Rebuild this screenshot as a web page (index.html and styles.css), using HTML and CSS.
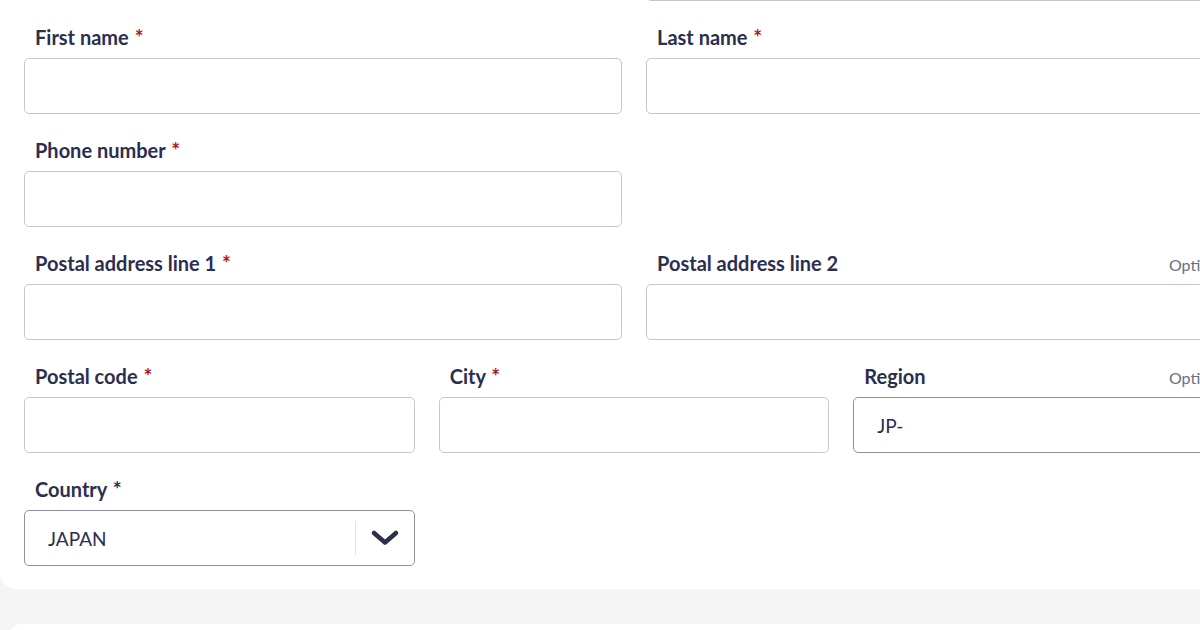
FILE: index.html
```html
<!DOCTYPE html>
<html lang="en">
<head>
<meta charset="utf-8">
<title>Address form</title>
<link rel="stylesheet" href="styles.css">
</head>
<body>
<div class="page">
  <section class="card">
    <div class="row two prev">
      <div class="field"></div>
      <div class="field"><div class="input"></div></div>
    </div>
    <div class="row two">
      <div class="field">
        <div class="label"><span>First name <b class="req">*</b></span></div>
        <div class="input"></div>
      </div>
      <div class="field">
        <div class="label"><span>Last name <b class="req">*</b></span></div>
        <div class="input"></div>
      </div>
    </div>
    <div class="row two">
      <div class="field">
        <div class="label"><span>Phone number <b class="req">*</b></span></div>
        <div class="input"></div>
      </div>
      <div class="field"></div>
    </div>
    <div class="row two">
      <div class="field">
        <div class="label"><span>Postal address line 1 <b class="req">*</b></span></div>
        <div class="input"></div>
      </div>
      <div class="field">
        <div class="label"><span>Postal address line 2</span><span class="opt">Optional</span></div>
        <div class="input"></div>
      </div>
    </div>
    <div class="row three">
      <div class="field">
        <div class="label"><span>Postal code <b class="req">*</b></span></div>
        <div class="input"></div>
      </div>
      <div class="field">
        <div class="label"><span>City <b class="req">*</b></span></div>
        <div class="input"></div>
      </div>
      <div class="field">
        <div class="label"><span>Region</span><span class="opt">Optional</span></div>
        <div class="input dark"><span class="value">JP-</span></div>
      </div>
    </div>
    <div class="row three">
      <div class="field">
        <div class="label"><span>Country <b class="plain">*</b></span></div>
        <div class="select">
          <span class="value">JAPAN</span>
          <span class="arrow">
            <svg width="30" height="18" viewBox="0 0 30 18" aria-hidden="true">
              <polyline points="4,4 15,13.5 26,4" fill="none" stroke="#2b2e4f" stroke-width="4.5" stroke-linecap="round" stroke-linejoin="round"/>
            </svg>
          </span>
        </div>
      </div>
    </div>
  </section>
  <section class="card next"></section>
</div>
</body>
</html>
```

FILE: styles.css
```css
html, body {
  margin: 0;
  padding: 0;
  background: #f5f5f5;
  overflow: hidden;
}
body {
  font-family: Lato, "Open Sans", "Liberation Sans", sans-serif;
  color: #2b2e4f;
}
.page {
  width: 1268px;
}
.card {
  background: #ffffff;
  border-radius: 0 0 16px 16px;
  padding: 0 24px 23px 24px;
  margin-top: -55px;
}
.card.next {
  margin-top: 35px;
  margin-left: 6px;
  height: 60px;
  border-radius: 16px 16px 0 0;
  padding: 0;
}
.row {
  display: grid;
  column-gap: 24px;
  margin-top: 25px;
}
.row.prev {
  margin-top: 0;
}
.row.two {
  grid-template-columns: 1fr 1fr;
}
.row.three {
  grid-template-columns: 1fr 1fr 1fr;
}
.label {
  display: flex;
  justify-content: space-between;
  align-items: baseline;
  padding: 0 11px 2px 11px;
  height: 22px;
  line-height: 22px;
  margin-bottom: 8px;
  font-size: 20px;
  font-weight: 700;
  color: #2b2e4f;
}
.req, .plain {
  font-size: 21px;
  font-weight: 700;
  margin-left: 1px;
}
.req {
  color: #b3141c;
}
.opt {
  font-size: 16px;
  font-weight: 400;
  color: #6b6f80;
  margin-right: 3px;
}
.input, .select {
  box-sizing: border-box;
  height: 56px;
  border: 1px solid #c6c7ca;
  border-radius: 5px;
  background: #fff;
  display: flex;
  align-items: center;
}
.input.dark, .select {
  border-color: #8c91a7;
}
.value {
  padding-left: 23px;
  font-size: 19px;
  color: #2b2e4f;
  flex: 1;
}
.arrow {
  width: 58px;
  height: 34px;
  border-left: 1px solid #e2e2e4;
  display: flex;
  align-items: center;
  justify-content: center;
}
.arrow svg {
  display: block;
}
```
